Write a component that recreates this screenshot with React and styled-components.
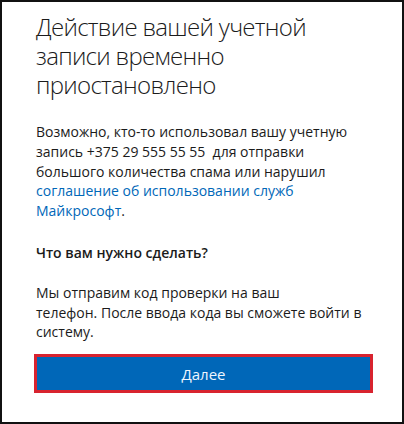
import React from 'react'
import styled, { createGlobalStyle } from 'styled-components'

const Global = createGlobalStyle`
  html, body { margin: 0; padding: 0; background: #fff; }
  * { box-sizing: border-box; }
`

const Frame = styled.div`
  width: 404px;
  height: 424px;
  border: 2px solid #111;
  background: #fff;
  padding: 10px 32px 0 34px;
  font-family: "Open Sans", "Noto Sans", sans-serif;
  color: #1b1b1b;
`

const Title = styled.h1`
  margin: 0;
  font-size: 24px;
  font-weight: 300;
  letter-spacing: -0.7px;
  line-height: 29px;
  color: #1b1b1b;
`

const Text = styled.p`
  margin: ${p => p.$top || 0}px 0 0;
  font-size: 14px;
  line-height: 19.8px;
  font-weight: ${p => (p.$bold ? 600 : 400)};
  color: #1b1b1b;
`

const Link = styled.a`
  color: #0067b8;
  text-decoration: none;
`

const Button = styled.button`
  display: block;
  width: 333px;
  height: 33px;
  margin: 15px 0 0 1px;
  border: none;
  outline: 3px solid #d8232f;
  background: #0067b8;
  color: #eef6ff;
  font-family: inherit;
  font-size: 15px;
  cursor: pointer;
`

export default function App() {
  return (
    <>
      <Global />
      <Frame>
        <Title>Действие вашей учетной записи временно приостановлено</Title>
        <Text $top={23}>
          Возможно, кто-то использовал вашу учетную запись +375 29 555 55 55&nbsp; для отправки
          большого количества спама или нарушил{' '}
          <Link href="#">соглашение об использовании служб Майкрософт</Link>.
        </Text>
        <Text $top={22} $bold>Что вам нужно сделать?</Text>
        <Text $top={20}>
          Мы отправим код проверки на ваш<br />
          телефон. После ввода кода вы сможете войти в систему.
        </Text>
        <Button>Далее</Button>
      </Frame>
    </>
  )
}
